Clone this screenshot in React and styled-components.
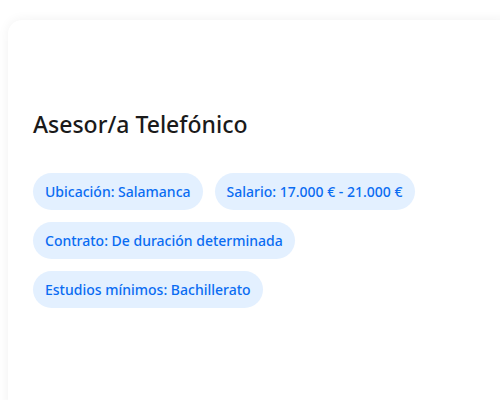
import styled, { createGlobalStyle } from "styled-components";

const GlobalStyle = createGlobalStyle`
  html, body {
    margin: 0;
    padding: 0;
    background: #fff;
    font-family: "Noto Sans", "Open Sans", sans-serif;
  }
  body {
    padding: 20px 0 0 8px;
    overflow: hidden;
    height: 400px;
    box-sizing: border-box;
  }
`;

const Card = styled.section`
  background: #fff;
  width: 510px;
  height: 400px;
  border-radius: 14px;
  box-shadow: 0 0 12px rgba(0, 0, 0, 0.06);
  padding: 89px 25px 24px;
  box-sizing: border-box;
`;

const Title = styled.h2`
  margin: 0 0 34px;
  font-size: 23px;
  font-weight: 500;
  line-height: 30px;
  color: #1a1a1a;
`;

const Tags = styled.div`
  display: flex;
  flex-wrap: wrap;
  gap: 12px;
  width: 400px;
`;

const Tag = styled.span`
  display: inline-block;
  background: #e3f0ff;
  color: #0a6cf2;
  font-size: 14px;
  font-weight: 500;
  line-height: 21px;
  padding: 8px 12px;
  border-radius: 19px;
  white-space: nowrap;
`;

const tags = [
  "Ubicación: Salamanca",
  "Salario: 17.000 € - 21.000 €",
  "Contrato: De duración determinada",
  "Estudios mínimos: Bachillerato",
];

export default function App() {
  return (
    <>
      <GlobalStyle />
      <Card>
        <Title>Asesor/a Telefónico</Title>
        <Tags>
          {tags.map((t) => (
            <Tag key={t}>{t}</Tag>
          ))}
        </Tags>
      </Card>
    </>
  );
}
